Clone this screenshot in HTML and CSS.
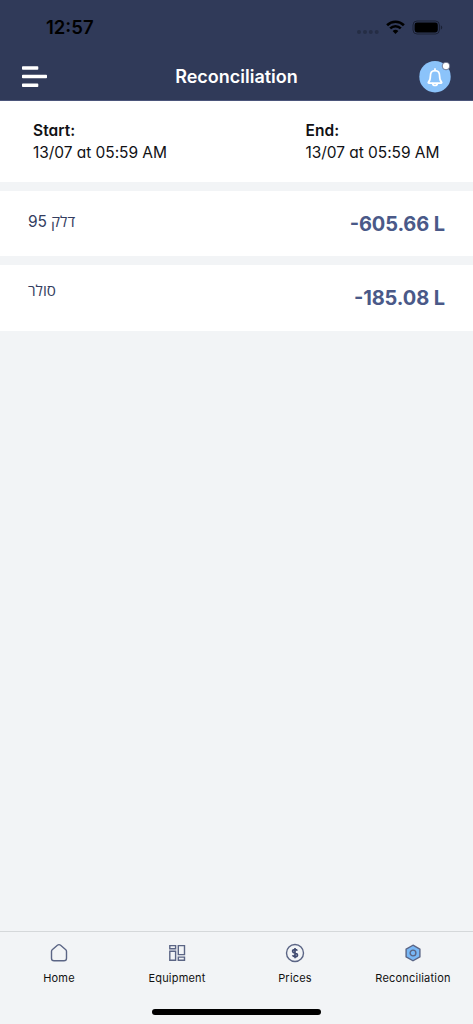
FILE: index.html
```
<!DOCTYPE html>
<html lang="en">
<head>
<title>Reconciliation</title>
<meta charset="utf-8">
<meta name="viewport" content="width=device-width, initial-scale=1">
<link rel="stylesheet" href="styles.css">
</head>
<body>
<header>
	<div class="status">
		<span class="time">12:57</span>
		<svg class="dots" width="22" height="4" viewBox="0 0 22 4"><circle cx="2" cy="2" r="2"/><circle cx="8" cy="2" r="2"/><circle cx="13.8" cy="2" r="2"/><circle cx="19.7" cy="2" r="2"/></svg>
		<svg class="wifi" width="19" height="14" viewBox="0 0 19 14">
			<path d="M1.1 5.2a12 12 0 0 1 16.8 0M4.2 8.4a7.6 7.6 0 0 1 10.6 0" fill="none" stroke="#000" stroke-width="2.6"/>
			<path d="M9.5 14L6.6 11.1a4.1 4.1 0 0 1 5.8 0z"/>
		</svg>
		<svg class="battery" width="31" height="15" viewBox="0 0 31 15">
			<rect x="1" y="1" width="26.4" height="13" rx="4" fill="none" stroke="#1a2033" stroke-width="1"/>
			<rect x="2.6" y="2.6" width="23.2" height="9.8" rx="2.4"/>
			<path d="M28.8 5.2q1.4.7 1.4 2.3t-1.4 2.3z" fill="#1a2033"/>
		</svg>
	</div>
	<div class="titlebar">
		<svg class="menu" width="26" height="22" viewBox="0 0 26 22"><path d="M.8.2h14.700q.8 0 .8.8v2q0 .8-.8.8H.8Q0 3.800 0 3V1Q0 .2.8.2zM.8 8.700h23.400q.8 0 .8.8v2q0 .8-.8.8H.8q-.8 0-.8-.8v-2q0-.8.8-.8zM.8 17.400h14.700q.8 0 .8.8v2q0 .8-.8.8H.8q-.8 0-.8-.8v-2q0-.8.8-.8z" fill="#fff"/></svg>
		<h1>Reconciliation</h1>
		<svg class="bell" width="32" height="32" viewBox="0 0 32 32">
			<circle cx="16" cy="15.7" r="15.7" fill="#8bc3fa"/>
			<path d="M9.4 21.2c1.5-1.3 2-2.8 2-6.2 0-3.1 1.7-5.3 4.600-5.300s4.600 2.200 4.600 5.300c0 3.400.5 4.900 2 6.200q.5.9-.6.9H10q-1.100 0-.6-.9z" fill="none" stroke="#fff" stroke-width="1.700" stroke-linejoin="round"/>
			<path d="M16 9.500V7.900M13.600 22.500q.3 2 2.400 2t2.400-2" fill="none" stroke="#fff" stroke-width="1.700" stroke-linecap="round"/>
			<circle cx="27" cy="5" r="3.800" fill="#fff" stroke="#464f70" stroke-width=".7"/>
		</svg>
	</div>
</header>
<main>
	<section class="period">
		<div><b>Start:</b><span>13/07 at 05:59 AM</span></div>
		<div><b>End:</b><span>13/07 at 05:59 AM</span></div>
	</section>
	<section class="row">
		<span class="fuel" dir="rtl">דלק <span class="octane">95</span></span>
		<span class="amount">-605.66 L</span>
	</section>
	<section class="row">
		<span class="fuel plain" dir="rtl">סולר</span>
		<span class="amount">-185.08 L</span>
	</section>
</main>
<nav>
	<div class="tabs">
		<a class="tab home">
			<svg width="20" height="20" viewBox="0 0 20 20"><path d="M2.500 8.400q0-1 .7-1.600l5.200-4.500q1.600-1.300 3.200 0l5.200 4.500q.7.6.7 1.600v6.800q0 2.600-2.600 2.600H5.100q-2.600 0-2.600-2.600z"/></svg>
			<span>Home</span>
		</a>
		<a class="tab equip">
			<svg width="20" height="20" viewBox="0 0 20 20"><path d="M2.800 2.600h5.800v3.200H2.800zM2.800 8.300h5.800v9H2.800zM11.300 2.600h6.200v9h-6.200zM11.300 14.100h6.200v3.200h-6.200z"/></svg>
			<span>Equipment</span>
		</a>
		<a class="tab prices">
			<svg width="20" height="20" viewBox="0 0 20 20"><circle cx="10" cy="10" r="8.500"/><path class="dollar" d="M12.300 7.600Q11.600 6.500 10 6.500c-1.500 0-2.400.7-2.400 1.700 0 2.500 4.900 1.200 4.900 3.700 0 1-.9 1.700-2.500 1.700q-1.700 0-2.500-1.300M10 4.900v10.300"/></svg>
			<span>Prices</span>
		</a>
		<a class="tab recon">
			<svg width="20" height="20" viewBox="0 0 20 20"><path class="hex" d="M10 2.200l6.900 3.900v7.800L10 17.800l-6.900-3.900V6.100z"/><circle cx="10" cy="10" r="2.900"/></svg>
			<span>Reconciliation</span>
		</a>
	</div>
	<div class="handle"></div>
</nav>
</body>
</html>
```

FILE: styles.css
```
* {
	box-sizing: border-box;
}
body {
	margin: 0;
	height: 1024px;
	display: flex;
	flex-direction: column;
	background: #f2f4f6;
	font-family: Inter, "Open Sans", "Noto Sans", sans-serif;
}
svg {
	display: block;
}
header {
	height: 101px;
	background: #303a59;
	border-bottom: 1px solid #4b557a;
}
.status {
	height: 52px;
	display: flex;
	align-items: center;
	padding: 2px 30px 0 46px;
}
.time {
	font-size: 18.5px;
	font-weight: 600;
	margin-right: auto;
}
.dots {
	fill: #252d45;
	margin: 10px 7px 0 0;
}
.wifi {
	margin-right: 7px;
}
.titlebar {
	height: 48px;
	display: grid;
	grid-template-columns: 32px 1fr 32px;
	align-items: center;
	padding: 1px 22px 0;
}
h1 {
	margin: 0 0 1px;
	color: #fff;
	font-size: 18px;
	font-weight: 600;
	text-align: center;
}
main {
	flex: 1;
}
.period {
	height: 81px;
	display: flex;
	justify-content: space-between;
	padding: 19px 33px 0;
	background: #fff;
	color: #111115;
	font-size: 15.5px;
	line-height: 22px;
	font-feature-settings: "cv11";
}
.period div {
	width: 134.5px;
	white-space: nowrap;
	letter-spacing: -0.05px;
}
.period b {
	display: block;
	font-weight: 600;
	letter-spacing: 0.05px;
}
.row {
	height: 65.6px;
	margin-top: 8.8px;
	padding: 0 28px;
	display: flex;
	justify-content: space-between;
	background: #fff;
}
.fuel {
	padding-top: 20px;
	color: #343d60;
	font-family: "Open Sans", "Noto Sans", sans-serif;
	font-size: 15.2px;
	line-height: 20px;
}
.plain {
	padding-top: 15px;
}
.octane {
	font-family: Inter, sans-serif;
	font-size: 15.5px;
}
.amount {
	padding-top: 20px;
	color: #4a5988;
	font-size: 20px;
	font-weight: 750;
	line-height: 26px;
	letter-spacing: -0.1px;
	font-feature-settings: "case";
}
nav {
	height: 93px;
	border-top: 1px solid #d5d8da;
}
.tabs {
	display: grid;
	grid-template-columns: repeat(4, 118px);
	height: 77px;
}
.tab {
	display: flex;
	flex-direction: column;
	align-items: center;
	padding-top: 11px;
	color: #111;
	font-size: 11px;
	font-weight: 400;
	letter-spacing: 0.2px;
}
.tab svg {
	fill: none;
	stroke: #5b6585;
	stroke-width: 1.4;
	margin-bottom: 8px;
}
.tab .dollar {
	stroke: #414b70;
	stroke-width: 1.7;
}
.recon svg {
	fill: #78b7f5;
}
.handle {
	width: 169px;
	height: 6px;
	margin: 0 auto;
	border-radius: 3px;
	background: #000;
}
```
